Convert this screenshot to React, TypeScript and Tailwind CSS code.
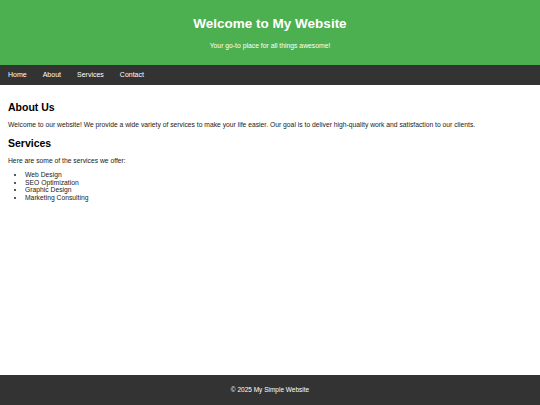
export default function App() {
  return (
    <div className="min-h-[405px] flex flex-col bg-white" style={{ fontFamily: '"Liberation Sans", Arial, sans-serif' }}>
      <header className="bg-[#4CAF50] text-white text-center h-[65px] flex flex-col items-center justify-center">
        <h1 className="text-[13.5px] font-bold leading-none mt-[2px]">Welcome to My Website</h1>
        <p className="text-[6.8px] leading-none mt-[12px]">Your go-to place for all things awesome!</p>
      </header>
      <nav className="bg-[#333] h-[19.5px] flex items-center px-2 gap-[16px] text-white text-[7px]">
        <a>Home</a>
        <a>About</a>
        <a>Services</a>
        <a>Contact</a>
      </nav>
      <main className="flex-1 px-2 pt-[17px] text-[6.75px] leading-[7.7px] text-[#222]">
        <h2 className="text-[10.5px] font-bold leading-none text-black">About Us</h2>
        <p className="mt-[9px]">Welcome to our website! We provide a wide variety of services to make your life easier. Our goal is to deliver high-quality work and satisfaction to our clients.</p>
        <h2 className="text-[10.5px] font-bold leading-none mt-[9px] text-black">Services</h2>
        <p className="mt-[9px]">Here are some of the services we offer:</p>
        <ul className="list-disc pl-[17px] mt-[6px]">
          <li>Web Design</li>
          <li>SEO Optimization</li>
          <li>Graphic Design</li>
          <li>Marketing Consulting</li>
        </ul>
      </main>
      <footer className="bg-[#333] text-white text-center h-[30px] flex items-center justify-center text-[6.5px]">
        © 2025 My Simple Website
      </footer>
    </div>
  );
}
